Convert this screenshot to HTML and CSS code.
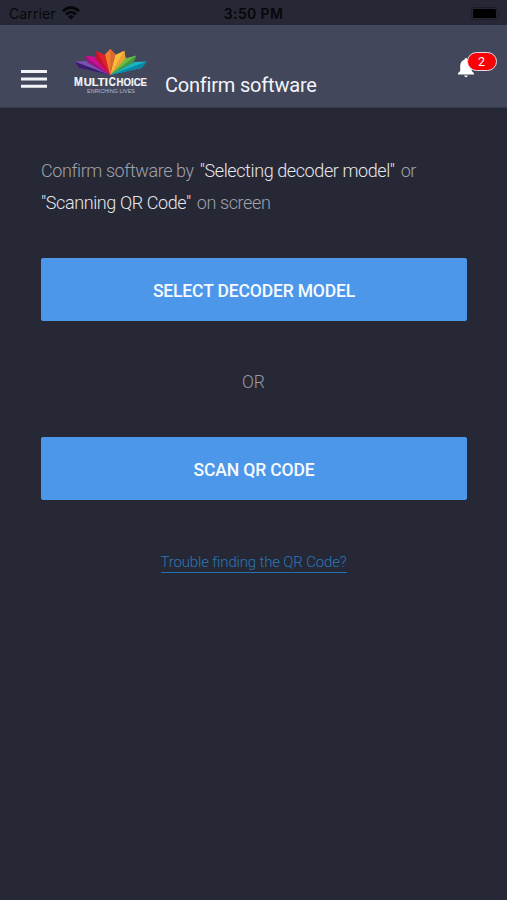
FILE: index.html
```html
<!DOCTYPE html>
<html lang="en">
<head>
<meta charset="utf-8">
<title>Confirm software</title>
<link rel="stylesheet" href="styles.css">
</head>
<body>
<div class="status">
  <div class="carrier"><span>Carrier</span>
    <svg class="wifi" width="18" height="14" viewBox="0 0 18 14"><g fill="none" stroke="#06070b" stroke-width="2.7"><path d="M1 5.2Q9-2.2 17 5.2"/><path d="M4 8.5Q9 3.7 14 8.5"/></g><path d="M6 10.5Q9 7.8 12 10.5L9 13.5Z" fill="#06070b"/></svg>
  </div>
  <div class="time">3:50 PM</div>
  <svg class="battery" width="30" height="13" viewBox="0 0 30 13"><rect x=".5" y=".5" width="26" height="12" rx="3" fill="none" stroke="#1b1d29"/><rect x="2" y="2" width="23" height="9" rx="1.5" fill="#000"/><path d="M28 4.5Q30 6.5 28 8.5Z" fill="#171923"/></svg>
</div>
<header class="bar">
  <svg class="menu" width="26" height="18" viewBox="0 0 26 18"><path d="M0 1.6H26M0 8.9H26M0 16.2H26" stroke="#f3f4f8" stroke-width="3"/></svg>
  <svg class="logo" width="88" height="50" viewBox="0 0 88 50">
    <path d="M38 29 14 15 2.5 15.5 7 22Z" fill="#7652b0"/><path d="M38 29 7 22 2.5 15.5Z" fill="#3a1c6c"/>
    <path d="M38 29 24 11 13 9.5 15.5 16.5Z" fill="#ca0f91"/><path d="M38 29 15.5 16.5 13 9.5 19 15Z" fill="#96167c"/>
    <path d="M38 29 33.5 9 24.3 5.3 23.5 12.5Z" fill="#df202c"/><path d="M38 29 23.5 12.5 24.3 5.3Z" fill="#bb1533"/>
    <path d="M38 29 53 12.5 64.3 9.5 61 17Z" fill="#6bbc46"/><path d="M38 29 64.3 9.5 61 17Z" fill="#3d9b46"/>
    <path d="M38 29 63 16 74.8 15.5 69.5 22Z" fill="#17b6c8"/><path d="M38 29 74.8 15.5 69.5 22Z" fill="#0986a5"/>
    <path d="M38 29 43 9 52.3 4.8 53.5 12.5Z" fill="#fabd3b"/><path d="M38 29 52.3 4.8 53.5 12.5Z" fill="#eba034"/>
    <path d="M38 29 33 8.5 38.3 3 43.5 8.5Z" fill="#f1802d"/><path d="M38 29 38.3 3 43.5 8.5Z" fill="#dc6a2f"/>
    <g class="brand"><text x="2" y="40.2" font-size="13" textLength="8.8" lengthAdjust="spacingAndGlyphs">M</text><text x="11.8" y="40.2" font-size="11.5" textLength="24" lengthAdjust="spacingAndGlyphs">ULTI</text><text x="36.8" y="40.2" font-size="13" textLength="7" lengthAdjust="spacingAndGlyphs">C</text><text x="44.6" y="40.2" font-size="11.5" textLength="30.4" lengthAdjust="spacingAndGlyphs">HOICE</text></g>
    <text class="tagline" x="15" y="46.8" textLength="48" lengthAdjust="spacing">ENRICHING LIVES</text>
  </svg>
  <h1>Confirm software</h1>
  <div class="alerts">
    <svg width="18" height="20" viewBox="0 0 18 20"><path d="M0 16.5V15.2L2.2 13V8Q2.5 2.7 6.5 1.8V1Q8 -.8 9.5 1V1.8Q13.5 2.7 13.8 8V13L16 15.2V16.5ZM6.2 17.5H9.8Q9.4 19.2 8 19.2T6.2 17.5Z" fill="#fff"/></svg>
    <span class="badge">2</span>
  </div>
</header>
<main>
  <p class="intro">Confirm software by <b>"Selecting decoder model"</b> or<br><b class="first">"Scanning QR Code"</b> on screen</p>
  <button class="select">SELECT DECODER MODEL</button>
  <div class="or">OR</div>
  <button class="scan">SCAN QR CODE</button>
  <a class="help">Trouble finding the QR Code?</a>
</main>
</body>
</html>
```
FILE: styles.css
```css
* { box-sizing: border-box; }
body { margin: 0; height: 900px; overflow: hidden; background: #262835; font-family: Roboto, sans-serif; }
.status { height: 25px; display: grid; grid-template-columns: 1fr auto 1fr; align-items: center; padding: 3px 6px 0 9px; color: #06070b; font-family: Inter, sans-serif; font-size: 14px; line-height: 20px; }
.carrier { display: flex; align-items: center; gap: 6px; letter-spacing: .1px; }
.wifi { display: block; margin-top: -2px; }
.time { font-weight: 600; letter-spacing: .35px; font-size: 14px; margin-right: 3px; }
.battery { justify-self: end; margin-top: -2px; }
.bar { height: 83px; background: #42475b; border-bottom: 1px solid #363a4a; display: flex; align-items: flex-start; padding-left: 21px; }
.menu { margin-top: 45px; }
.logo { margin: 21px 0 0 25px; flex: none; overflow: visible; }
.brand { fill: #f5f5fa; font-family: "Liberation Sans", sans-serif; font-weight: bold; stroke: #f5f5fa; stroke-width: .2px; }
.tagline { fill: #b4b7c6; font: 5.5px "Liberation Sans Narrow", "Liberation Sans", sans-serif; }
h1 { margin: 47px 0 0 5px; font-size: 20px; font-weight: 400; line-height: 26px; color: #f3f4fa; letter-spacing: -.2px; white-space: nowrap; }
.alerts { position: relative; margin: 33px 9px 0 auto; width: 40px; height: 20px; }
.badge { position: absolute; left: 9px; top: -6px; width: 30px; height: 19px; border: 1px solid #e3dce5; border-radius: 10px; background: #fd0005; color: #fff; font-size: 12.5px; line-height: 18px; text-align: center; padding-right: 1px; }
main { padding: 47px 41px 0; display: flex; flex-direction: column; }
.intro { margin: 0; font-size: 18px; line-height: 32px; font-weight: 300; color: #a0a2ad; letter-spacing: -.4px; white-space: nowrap; }
.intro b { font-weight: 300; color: #e6e7ef; margin: 0 2px; }
.intro .first { margin-left: 0; }
button { height: 63px; width: 426px; border: 0; border-radius: 2px; background: #4d97eb; color: #f7fbff; font: 500 17.5px Roboto, sans-serif; letter-spacing: -.15px; padding: 2px 0 0; }
.select { margin-top: 39px; }
.or { margin: 49px 0 42px; height: 25px; line-height: 25px; text-align: center; color: #999ba7; font-size: 17.5px; font-weight: 300; }
.help { align-self: center; margin-top: 52px; height: 21px; line-height: 20px; font-size: 15px; font-weight: 300; letter-spacing: -.16px; color: #2b77b5; border-bottom: 1px solid #286fae; white-space: nowrap; }
```
